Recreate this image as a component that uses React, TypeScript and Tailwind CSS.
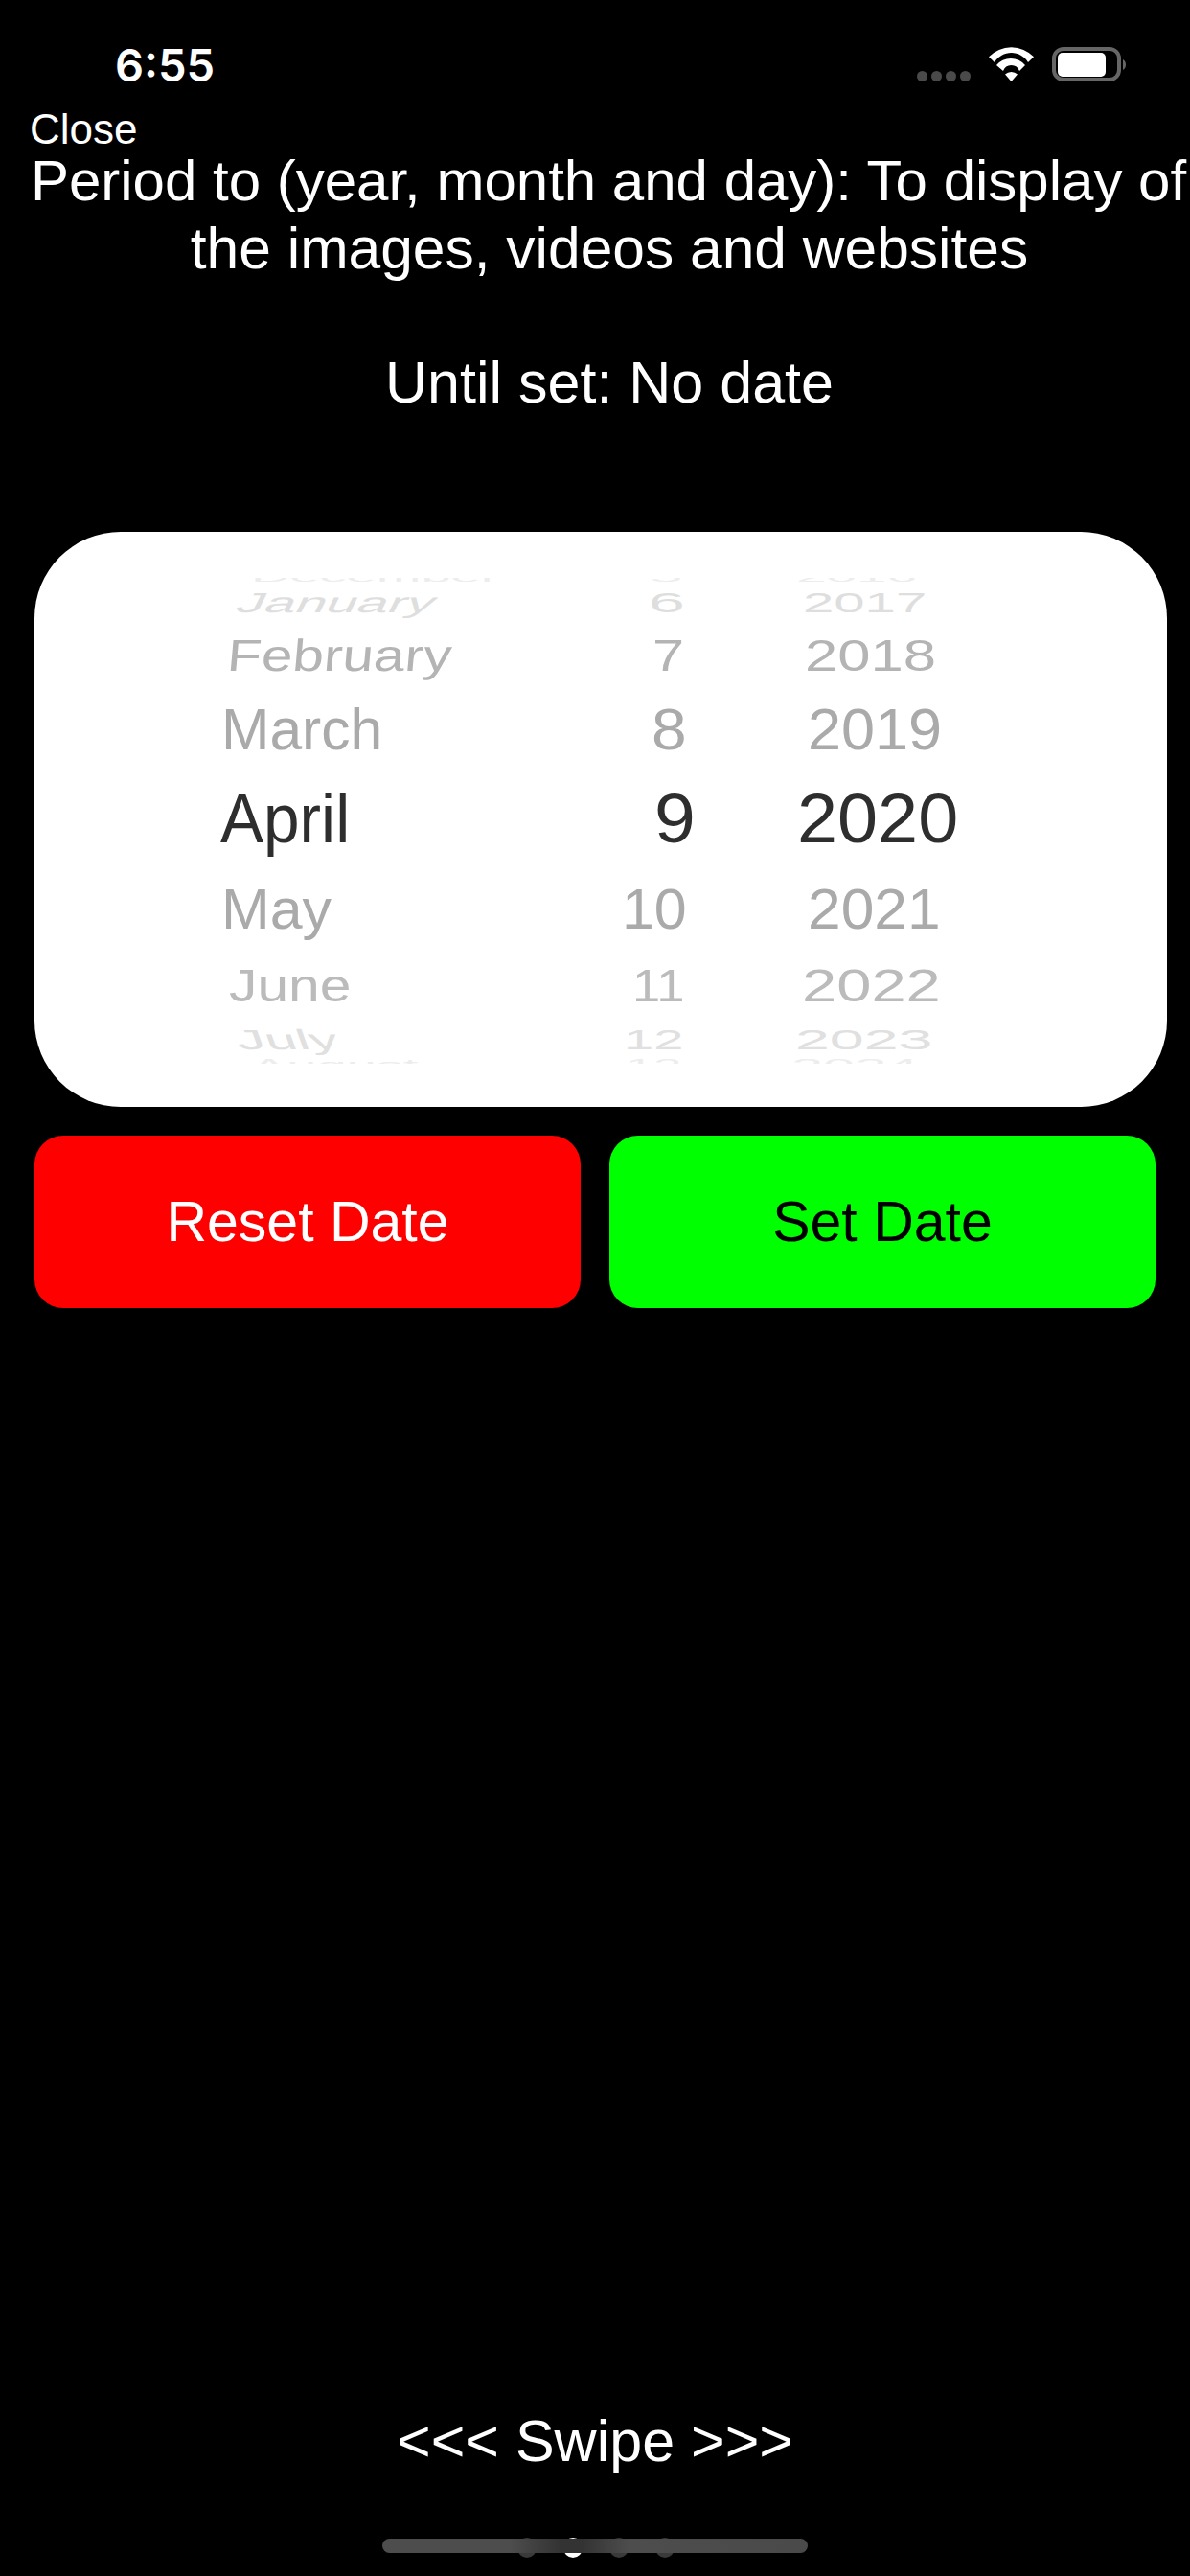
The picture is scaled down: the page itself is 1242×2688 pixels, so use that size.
const sans = "font-['Liberation_Sans',Arial,sans-serif]";

type Cell = { t: string; c: string };
type Row = { h: string; color: string; month: Cell; day: Cell; year: Cell };

const rows: Row[] = [
  {
    h: "h-[32px]",
    color: "text-[#ededed]",
    month: { t: "December", c: "ml-[62px] scale-x-[0.8] scale-y-[0.2]" },
    day: { t: "5", c: "ml-[78px] scale-x-[0.88] scale-y-[0.2]" },
    year: { t: "2016", c: "ml-[31px] scale-x-[0.81] scale-y-[0.2]" },
  },
  {
    h: "h-[61px]",
    color: "text-[#dedede]",
    month: { t: "January", c: "ml-[44px] scale-x-[0.827] scale-y-[0.417] -skew-x-[14deg]" },
    day: { t: "6", c: "ml-[77px] scale-x-[0.97] scale-y-[0.417]" },
    year: { t: "2017", c: "ml-[38px] scale-x-[0.83] scale-y-[0.417]" },
  },
  {
    h: "h-[82px]",
    color: "text-[#b4b4b4]",
    month: { t: "February", c: "ml-[36px] scale-x-[0.835] scale-y-[0.667] -skew-x-[4deg]" },
    day: { t: "7", c: "ml-[81px] scale-x-[0.85] scale-y-[0.667]" },
    year: { t: "2018", c: "ml-[40px] scale-x-[0.88] scale-y-[0.667]" },
  },
  {
    h: "h-[97px]",
    color: "text-[#aaaaaa]",
    month: { t: "March", c: "ml-[31px] scale-x-[0.865] scale-y-[0.875]" },
    day: { t: "8", c: "ml-[80px] scale-x-[0.94] scale-y-[0.875]" },
    year: { t: "2019", c: "ml-[43px] scale-x-[0.9] scale-y-[0.875]" },
  },
  {
    h: "h-[90px]",
    color: "text-[#2e2e2e]",
    month: { t: "April", c: "ml-[30px] scale-x-[0.965] scale-y-[1.04]" },
    day: { t: "9", c: "ml-[83px] scale-x-[1.1] scale-y-[1.04]" },
    year: { t: "2020", c: "ml-[32px] scale-x-[1.08] scale-y-[1.04]" },
  },
  {
    h: "h-[76px]",
    color: "text-[#aaaaaa]",
    month: { t: "May", c: "ml-[31px] scale-x-[0.87] scale-y-[0.854]" },
    day: { t: "10", c: "ml-[49px] scale-x-[0.87] scale-y-[0.854]" },
    year: { t: "2021", c: "ml-[43px] scale-x-[0.89] scale-y-[0.854]" },
  },
  {
    h: "h-[50px]",
    color: "text-[#bbbbbb]",
    month: { t: "June", c: "ml-[39px] scale-x-[0.84] scale-y-[0.6875]" },
    day: { t: "11", c: "ml-[60px] scale-x-[0.75] scale-y-[0.6875]" },
    year: { t: "2022", c: "ml-[37px] scale-x-[0.93] scale-y-[0.6875]" },
  },
  {
    h: "h-[23px]",
    color: "text-[#e0e0e0]",
    month: { t: "July", c: "ml-[50px] scale-x-[0.85] scale-y-[0.417] skew-x-[10deg]" },
    day: { t: "12", c: "ml-[51px] scale-x-[0.8] scale-y-[0.417]" },
    year: { t: "2023", c: "ml-[30px] scale-x-[0.92] scale-y-[0.417]" },
  },
  {
    h: "h-[70px]",
    color: "text-[#ededed]",
    month: { t: "August", c: "ml-[62px] scale-x-[0.8] scale-y-[0.25]" },
    day: { t: "13", c: "ml-[53px] scale-x-[0.75] scale-y-[0.25]" },
    year: { t: "2024", c: "ml-[26px] scale-x-[0.85] scale-y-[0.25]" },
  },
];

function PickerCell({ cell, width }: { cell: Cell; width: string }) {
  return (
    <div className={`${width} shrink-0`}>
      <span className={`inline-block origin-[0_59px] whitespace-pre ${cell.c}`}>{cell.t}</span>
    </div>
  );
}

function Wifi() {
  return (
    <svg width="47" height="36" viewBox="0 0 47 36" fill="#fff">
      <path d="M0 10.3A32.6 32.6 0 0 1 47 10.3L41 16A20.3 20.3 0 0 0 6 16Z" />
      <path d="M8 19A19.6 19.6 0 0 1 38 19L32 25A9 9 0 0 0 15 25Z" />
      <path d="M17 28.5A9.7 9.7 0 0 1 30 28.5L23.5 36Z" />
    </svg>
  );
}

function Battery() {
  return (
    <svg width="80" height="36" viewBox="0 0 80 36">
      <rect x="2" y="2" width="68" height="32" rx="10" fill="none" stroke="#666" strokeWidth="4" />
      <rect x="6" y="6" width="50" height="25" rx="5" fill="#fff" />
      <path d="M74 13A5 6 0 0 1 74 24Z" fill="#666" />
    </svg>
  );
}

export default function App() {
  return (
    <div className={`${sans} relative flex h-[2688px] w-[1242px] flex-col overflow-hidden bg-black text-white`}>
      <div className="flex h-[111px] items-start justify-between pt-[50px] pl-[120px] pr-[64px]">
        <span className="font-['Inter',sans-serif] text-[47px] font-semibold leading-[36px]">6:55</span>
        <div className="-mt-[1px] flex items-end gap-[19px]">
          <div className="flex gap-[4px]">
            <span className="h-[11px] w-[11px] rounded-full bg-[#4a4a4a]" />
            <span className="h-[11px] w-[11px] rounded-full bg-[#4a4a4a]" />
            <span className="h-[11px] w-[11px] rounded-full bg-[#4a4a4a]" />
            <span className="h-[11px] w-[11px] rounded-full bg-[#4a4a4a]" />
          </div>
          <Wifi />
          <Battery />
        </div>
      </div>

      <div className="h-[43px] pl-[31px] text-[44px] leading-[48px]">Close</div>

      <div className="w-[1272px] text-center text-[61px] leading-[70px]">
        <p className="-ml-[2px] text-[60px]">Period to (year, month and day): To display of</p>
        <p className="text-[60.5px]">the images, videos and websites</p>
        <p>&nbsp;</p>
        <p>Until set: No date</p>
      </div>

      <div className="mx-[36px] mt-[121px] h-[600px] w-[1182px] rounded-[90px] bg-white pt-[48px]">
        <div className="h-[507px] overflow-hidden pl-[164px] text-[70px] leading-[70px]">
          <div className="-mt-[55px] flex flex-col">
            {rows.map((r) => (
              <div key={r.month.t} className={`flex ${r.h} ${r.color}`}>
                <PickerCell cell={r.month} width="w-[400px]" />
                <PickerCell cell={r.day} width="w-[200px]" />
                <PickerCell cell={r.year} width="w-[300px]" />
              </div>
            ))}
          </div>
        </div>
      </div>

      <div className="ml-[36px] mt-[30px] flex gap-[30px]">
        <div className="flex h-[180px] w-[570px] items-center justify-center rounded-[30px] bg-[#ff0000] text-[59px]">
          Reset Date
        </div>
        <div className="flex h-[180px] w-[570px] items-center justify-center rounded-[30px] bg-[#00ff00] text-[59px] text-black">
          Set Date
        </div>
      </div>

      <div className="mt-auto mb-[106px] text-center text-[61px] leading-[70px]">
        &lt;&lt;&lt; Swipe &gt;&gt;&gt;
      </div>

      <div className="absolute left-[540px] top-[2648px] flex gap-[28px]">
        <span className="h-[21px] w-[20px] rounded-full bg-[#3a3a3a]" />
        <span className="h-[21px] w-[20px] rounded-full bg-white" />
        <span className="h-[21px] w-[20px] rounded-full bg-[#3a3a3a]" />
        <span className="h-[21px] w-[20px] rounded-full bg-[#3a3a3a]" />
      </div>
      <div className="absolute left-[399px] top-[2649px] h-[15px] w-[444px] rounded-full bg-[linear-gradient(90deg,#4d4d4d_0%,#4d4d4d_30%,#333333_42%,#333333_47%,#4d4d4d_58%,#4a4a4a_100%)]" />
    </div>
  );
}
